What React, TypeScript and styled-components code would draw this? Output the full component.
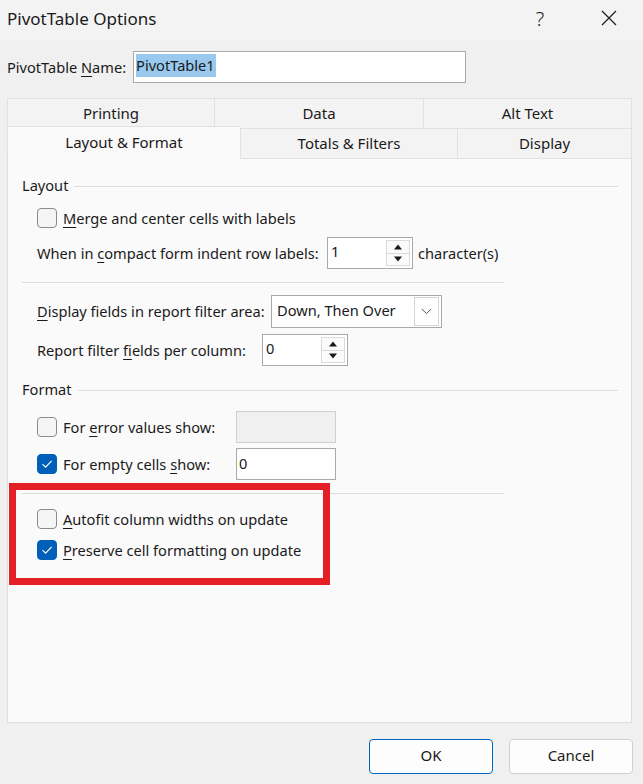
import React from "react";
import styled, { createGlobalStyle } from "styled-components";

const Global = createGlobalStyle`
  html, body { margin: 0; padding: 0; background: #f0f0f0; }
  body { font-family: "Noto Sans", "Open Sans", sans-serif; color: #1a1a1a; }
  * { box-sizing: border-box; }
`;

const Window = styled.div`
  width: 643px;
  height: 784px;
  display: flex;
  flex-direction: column;
  background: #f0f0f0;
  font-size: 14.6px;
  position: relative;
  overflow: hidden;
`;

const TitleBar = styled.div`
  height: 40px;
  background: #f3f3f3;
  display: flex;
  align-items: center;
  padding-left: 7px;
  padding-right: 0;
`;

const Title = styled.div`
  font-size: 17px;
  flex: 1;
  margin-top: -4px;
`;

const TitleButton = styled.div<{ $w: number }>`
  width: ${(p) => p.$w}px;
  height: 40px;
  display: flex;
  align-items: center;
  justify-content: center;
  font-size: 20px;
  font-weight: 300;
  margin-top: -4px;
`;

const NameRow = styled.div`
  margin-top: 11px;
  height: 32px;
  display: flex;
  align-items: center;
  padding-left: 7px;
  gap: 7px;
`;

const TextInput = styled.div<{ $w: number; $disabled?: boolean }>`
  width: ${(p) => p.$w}px;
  height: 32px;
  border: 1px solid ${(p) => (p.$disabled ? "#cfcfcf" : "#a9a9a9")};
  background: ${(p) => (p.$disabled ? "#f0f0f0" : "#ffffff")};
  display: flex;
  align-items: center;
  padding-left: 2px;
  padding-bottom: 3px;
  position: relative;
`;

const Selected = styled.span`
  background: #99c9ef;
  padding: 1px 1px 2px 0;
`;

const Tabs = styled.div`
  margin-top: 15px;
  margin-left: 7px;
  width: 625px;
  display: flex;
  flex-direction: column;
`;

const TabRow = styled.div`
  display: flex;
  height: 30px;
`;

const Tab = styled.div<{ $w: number; $active?: boolean }>`
  width: ${(p) => p.$w}px;
  height: ${(p) => (p.$active ? 33 : 31)}px;
  margin-top: ${(p) => (p.$active ? -2 : 0)}px;
  border: 1px solid #e1e1e1;
  border-right: none;
  border-bottom: ${(p) => (p.$active ? "none" : "1px solid #e1e1e1")};
  background: ${(p) => (p.$active ? "#f9f9f9" : "#f3f3f3")};
  display: flex;
  align-items: center;
  justify-content: center;
  padding-bottom: 2px;
  font-size: 15px;
  position: relative;
  z-index: ${(p) => (p.$active ? 2 : 1)};
  &:last-child { border-right: 1px solid #e1e1e1; }
`;

const Panel = styled.div`
  margin-left: 7px;
  width: 625px;
  height: 565px;
  background: #fafafa;
  border: 1px solid #dedede;
  border-top: none;
  padding: 18px 13px 0 14px;
  display: flex;
  flex-direction: column;
  position: relative;
`;

const GroupHeader = styled.div<{ $mt: number }>`
  margin-top: ${(p) => p.$mt}px;
  height: 20px;
  display: flex;
  align-items: center;
  gap: 6px;
  & > span { margin-top: -2px; }
  &::after {
    content: "";
    flex: 1;
    height: 1px;
    background: #dedede;
  }
`;

const Row = styled.div<{ $mt: number; $h: number }>`
  margin-top: ${(p) => p.$mt}px;
  height: ${(p) => p.$h}px;
  padding-left: 15px;
  display: flex;
  align-items: center;
`;

const Label = styled.span<{ $w?: number; $ml?: number }>`
  margin-top: -1px;
  margin-left: ${(p) => p.$ml ?? 0}px;
  ${(p) => (p.$w ? `width: ${p.$w}px;` : "")}
  flex-shrink: 0;
  white-space: nowrap;
`;

const Separator = styled.div<{ $mt: number }>`
  margin-top: ${(p) => p.$mt}px;
  width: 482px;
  height: 1px;
  background: #dedede;
`;

const Box = styled.div<{ $checked?: boolean }>`
  width: 20px;
  height: 20px;
  border-radius: 4px;
  border: 1px solid ${(p) => (p.$checked ? "#005fb8" : "#8a8a8a")};
  background: ${(p) => (p.$checked ? "#005fb8" : "#f5f5f5")};
  margin-right: 6px;
  display: flex;
  align-items: center;
  justify-content: center;
  flex-shrink: 0;
`;

const Spin = styled.div<{ $w: number }>`
  width: ${(p) => p.$w}px;
  height: 32px;
  border: 1px solid #a9a9a9;
  background: #fff;
  display: flex;
  align-items: stretch;
  padding: 2px 2px 2px 3px;
  flex-shrink: 0;
`;

const SpinValue = styled.div`
  flex: 1;
  padding-bottom: 4px;
  display: flex;
  align-items: center;
`;

const SpinButtons = styled.div`
  width: 24px;
  display: flex;
  flex-direction: column;
  border: 1px solid #dadada;
  background: #fbfbfb;
`;

const SpinBtn = styled.div<{ $top?: boolean }>`
  flex: 1;
  display: flex;
  align-items: center;
  justify-content: center;
  ${(p) => (p.$top ? "border-bottom: 1px solid #dadada;" : "")}
`;

const Select = styled.div`
  width: 171px;
  height: 33px;
  border: 1px solid #a9a9a9;
  background: #fff;
  display: flex;
  align-items: stretch;
  padding: 1px 2px 1px 5px;
  flex-shrink: 0;
`;

const SelectValue = styled.div`
  flex: 1;
  display: flex;
  align-items: center;
  padding-bottom: 3px;
`;

const SelectBtn = styled.div`
  width: 25px;
  border: 1px solid #d3d3d3;
  display: flex;
  align-items: center;
  justify-content: center;
`;

const Annotation = styled.div`
  position: absolute;
  left: 1px;
  top: 325px;
  width: 321px;
  height: 102px;
  border: 7px solid #e41f26;
  pointer-events: none;
`;

const Footer = styled.div`
  flex: 1;
  display: flex;
  justify-content: flex-end;
  align-items: flex-start;
  padding-top: 16px;
  padding-right: 10px;
  gap: 16px;
`;

const Button = styled.div<{ $primary?: boolean }>`
  width: 124px;
  height: 35px;
  border-radius: 4px;
  border: 1px solid ${(p) => (p.$primary ? "#0067c0" : "#d0d0d0")};
  background: #fdfdfd;
  display: flex;
  align-items: center;
  justify-content: center;
  padding-bottom: 3px;
  font-size: 15px;
`;

const U = styled.span`
  text-decoration: underline;
  text-underline-offset: 3px;
  text-decoration-thickness: 1px;
`;

const Check = () => (
  <svg width="12" height="10" viewBox="0 0 12 10">
    <path d="M1.5 5.2 L4.6 8.2 L10.6 1.8" fill="none" stroke="#fff" strokeWidth="1.1" />
  </svg>
);

const CheckBox = ({ checked }: { checked?: boolean }) => (
  <Box $checked={checked}>{checked && <Check />}</Box>
);

const Up = () => (
  <svg width="10" height="6" viewBox="0 0 10 6">
    <path d="M1 5.5 L5 0.5 L9 5.5 Z" fill="#1a1a1a" />
  </svg>
);
const Down = () => (
  <svg width="10" height="6" viewBox="0 0 10 6">
    <path d="M1 0.5 L5 5.5 L9 0.5 Z" fill="#1a1a1a" />
  </svg>
);

const Spinner = ({ w, value }: { w: number; value: string }) => (
  <Spin $w={w}>
    <SpinValue>{value}</SpinValue>
    <SpinButtons>
      <SpinBtn $top>
        <Up />
      </SpinBtn>
      <SpinBtn>
        <Down />
      </SpinBtn>
    </SpinButtons>
  </Spin>
);

export default function App() {
  return (
    <Window>
      <Global />
      <TitleBar>
        <Title>PivotTable Options</Title>
        <TitleButton $w={70}>?</TitleButton>
        <TitleButton $w={68}>
          <svg width="16" height="16" viewBox="0 0 16 16">
            <path d="M1 1 L15 15 M15 1 L1 15" stroke="#1a1a1a" strokeWidth="1.2" />
          </svg>
        </TitleButton>
      </TitleBar>

      <NameRow>
        <Label>
          PivotTable <U>N</U>ame:
        </Label>
        <TextInput $w={333}>
          <Selected>PivotTable1</Selected>
        </TextInput>
      </NameRow>

      <Tabs>
        <TabRow>
          <Tab $w={207}>Printing</Tab>
          <Tab $w={209}>Data</Tab>
          <Tab $w={209}>Alt Text</Tab>
        </TabRow>
        <TabRow>
          <Tab $w={233} $active>
            Layout &amp; Format
          </Tab>
          <Tab $w={217}>Totals &amp; Filters</Tab>
          <Tab $w={175}>Display</Tab>
        </TabRow>
      </Tabs>

      <Panel>
        <GroupHeader $mt={0}>
          <span>Layout</span>
        </GroupHeader>
        <Row $mt={12} $h={20}>
          <CheckBox />
          <Label>
            <U>M</U>erge and center cells with labels
          </Label>
        </Row>
        <Row $mt={9} $h={32}>
          <Label $w={290}>
            When in <U>c</U>ompact form indent row labels:
          </Label>
          <Spinner w={86} value="1" />
          <Label $ml={5}>character(s)</Label>
        </Row>
        <Separator $mt={13} />
        <Row $mt={12} $h={33}>
          <Label $w={234}>
            <U>D</U>isplay fields in report filter area:
          </Label>
          <Select>
            <SelectValue>Down, Then Over</SelectValue>
            <SelectBtn>
              <svg width="11" height="7" viewBox="0 0 11 7">
                <path d="M0.8 1 L5.5 5.6 L10.2 1" fill="none" stroke="#555" strokeWidth="1" />
              </svg>
            </SelectBtn>
          </Select>
        </Row>
        <Row $mt={6} $h={32}>
          <Label $w={225}>
            Report filter <U>f</U>ields per column:
          </Label>
          <Spinner w={86} value="0" />
        </Row>
        <GroupHeader $mt={14}>
          <span>Format</span>
        </GroupHeader>
        <Row $mt={11} $h={32}>
          <CheckBox />
          <Label $w={173}>
            For <U>e</U>rror values show:
          </Label>
          <TextInput $w={100} $disabled />
        </Row>
        <Row $mt={5} $h={32}>
          <CheckBox checked />
          <Label $w={173}>
            For empty cells <U>s</U>how:
          </Label>
          <TextInput $w={100}>0</TextInput>
        </Row>
        <Separator $mt={13} />
        <Row $mt={15} $h={20}>
          <CheckBox />
          <Label>
            <U>A</U>utofit column widths on update
          </Label>
        </Row>
        <Row $mt={11} $h={20}>
          <CheckBox checked />
          <Label>
            <U>P</U>reserve cell formatting on update
          </Label>
        </Row>
        <Annotation />
      </Panel>

      <Footer>
        <Button $primary>OK</Button>
        <Button>Cancel</Button>
      </Footer>
    </Window>
  );
}
